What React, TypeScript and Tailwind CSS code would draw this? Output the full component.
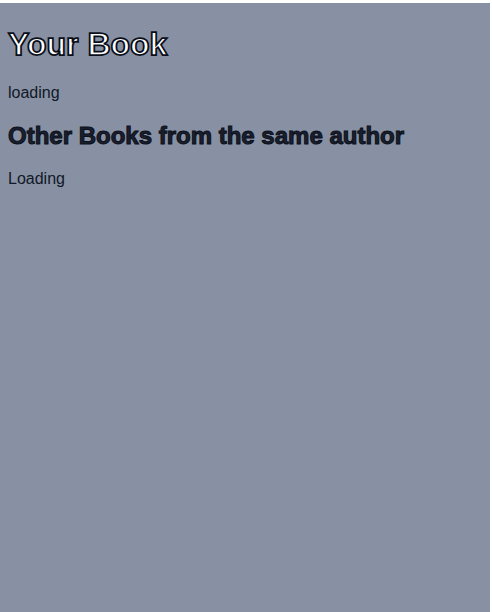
export default function App() {
  return (
    <div className="min-h-screen bg-white pt-[3px] pr-[2px] font-['Liberation_Sans',Arial,sans-serif]">
      <div className="min-h-[609px] bg-[#8791a3] px-2 pt-[23px] text-[#111827]">
        <h1 className="text-[32px] font-bold leading-[37px] text-white [-webkit-text-stroke:1.75px_#0b0f1a]">
          Your Book
        </h1>
        <p className="mt-[21px] text-base leading-[18px]">loading</p>
        <h2 className="mt-[20px] text-[24px] font-bold leading-[28px] text-[#1a1f2e] [-webkit-text-stroke:1px_#0b0f1a]">
          Other Books from the same author
        </h2>
        <p className="mt-[20px] text-base leading-[18px]">Loading</p>
      </div>
    </div>
  );
}
